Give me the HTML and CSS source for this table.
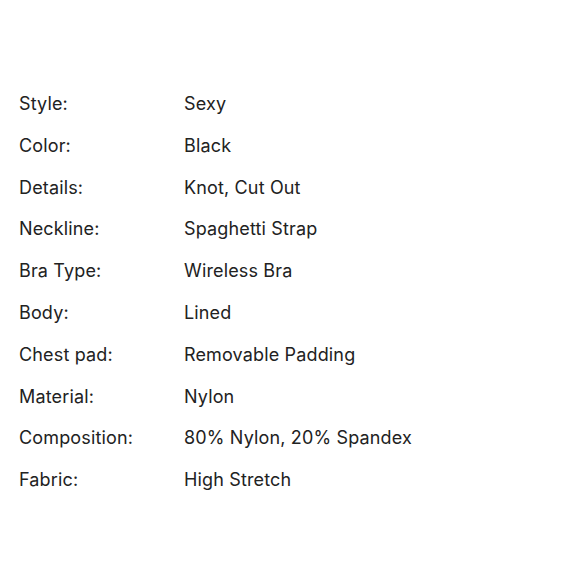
FILE: index.html
```html
<!DOCTYPE html>
<html>
<head>
<meta charset="utf-8">
<link rel="stylesheet" href="styles.css">
</head>
<body>
<div class="specs">
  <div class="row"><span class="label">Style:</span><span class="value">Sexy</span></div>
  <div class="row"><span class="label">Color:</span><span class="value">Black</span></div>
  <div class="row"><span class="label">Details:</span><span class="value">Knot, Cut Out</span></div>
  <div class="row"><span class="label">Neckline:</span><span class="value">Spaghetti Strap</span></div>
  <div class="row"><span class="label">Bra Type:</span><span class="value">Wireless Bra</span></div>
  <div class="row"><span class="label">Body:</span><span class="value">Lined</span></div>
  <div class="row"><span class="label">Chest pad:</span><span class="value">Removable Padding</span></div>
  <div class="row"><span class="label">Material:</span><span class="value">Nylon</span></div>
  <div class="row"><span class="label">Composition:</span><span class="value">80% Nylon, 20% Spandex</span></div>
  <div class="row"><span class="label">Fabric:</span><span class="value">High Stretch</span></div>
</div>
</body>
</html>
```
FILE: styles.css
```css
html, body {
  margin: 0;
  padding: 0;
  background: #fff;
}
body {
  font-family: Inter, "Liberation Sans", Arial, sans-serif;
  font-size: 18px;
  letter-spacing: 0.15px;
  color: #222;
}
.specs {
  padding: 83px 0 0 19px;
  display: flex;
  flex-direction: column;
}
.row {
  display: grid;
  grid-template-columns: 165px auto;
  height: 41.8px;
  line-height: 41.8px;
}
```
